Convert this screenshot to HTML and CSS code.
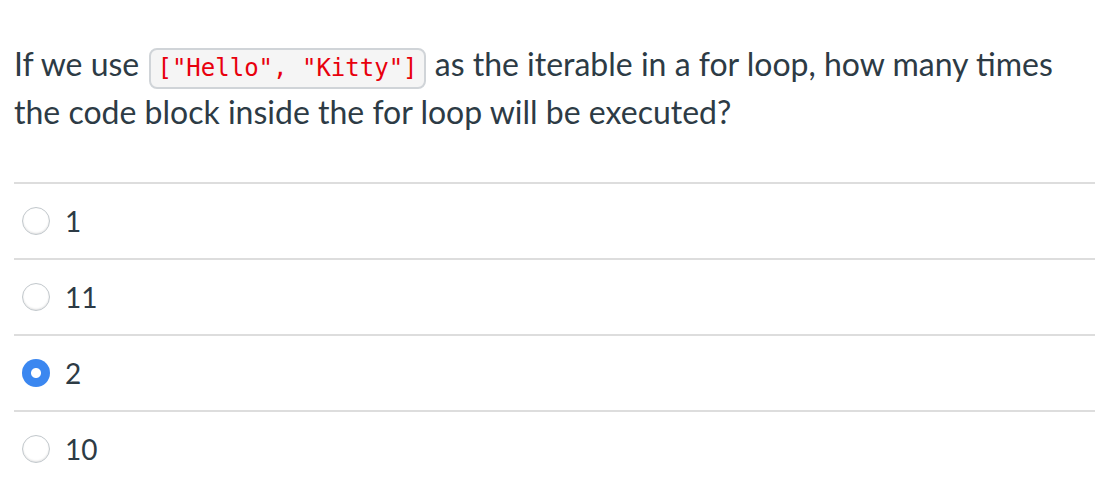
FILE: index.html
```html
<!DOCTYPE html>
<html>
<head>
<meta charset="utf-8">
<link rel="stylesheet" href="styles.css">
</head>
<body>
<div class="quiz">
  <p class="question">If we use <code class="code">["Hello", "Kitty"]</code> as the iterable in a for loop, how many times the code block inside the for loop will be executed?</p>
  <div class="answers">
    <label class="answer"><span class="radio"></span><span class="label">1</span></label>
    <label class="answer"><span class="radio"></span><span class="label">11</span></label>
    <label class="answer"><span class="radio checked"></span><span class="label">2</span></label>
    <label class="answer"><span class="radio"></span><span class="label">10</span></label>
  </div>
</div>
</body>
</html>
```
FILE: styles.css
```css
html, body {
  margin: 0;
  padding: 0;
  background: #fff;
}
body {
  font-family: Lato, "Noto Sans", sans-serif;
  color: #2d3b45;
}
.quiz {
  padding: 41px 0 0 14px;
}
.question {
  margin: 0;
  font-size: 32px;
  line-height: 46px;
  padding-right: 30px;
}
.code {
  display: inline-block;
  font-family: "DejaVu Sans Mono", monospace;
  font-size: 24px;
  line-height: 31px;
  color: #e8000d;
  background: #f5f5f5;
  border: 2px solid #d0d4d8;
  border-radius: 8px;
  padding: 3px 6px;
  margin: 0 1px 0 2px;
}
.answers {
  margin-top: 47px;
  border-top: 2px solid #dddddd;
}
.answer {
  display: flex;
  align-items: center;
  height: 74px;
  border-bottom: 2px solid #dddddd;
  gap: 15px;
  padding-left: 8px;
}
.answer:last-child {
  border-bottom: none;
}
.radio {
  width: 26px;
  height: 26px;
  border-radius: 50%;
  border: 1px solid #c2c8cc;
  box-shadow: inset 0 -1px 2px rgba(0,0,0,0.12);
  background: #fff;
}
.radio.checked {
  width: 28px;
  height: 28px;
  border: none;
  box-shadow: none;
  background: radial-gradient(circle, #fff 0 4.5px, #3b87f0 5.5px);
}
.label {
  font-size: 28px;
}
```
